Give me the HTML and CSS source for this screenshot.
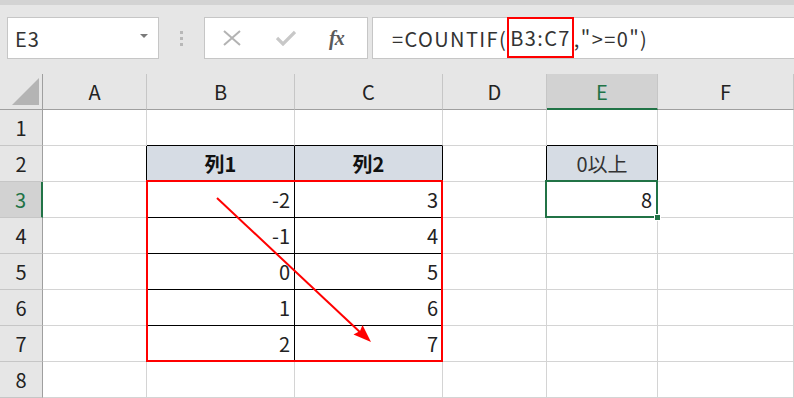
FILE: index.html
```html
<!DOCTYPE html>
<html lang="ja">
<head>
    <meta charset="UTF-8">
    <title>COUNTIF</title>
    <link rel="stylesheet" href="styles.css">
</head>
<body>
    <div class="toolbar">
        <div class="namebox">
            <span>E3</span>
            <span class="drop"></span>
        </div>
        <div class="grip"><i></i><i></i><i></i></div>
        <div class="fxbox">
            <svg class="ic" width="20" height="16" viewBox="0 0 20 16">
                <path d="M2 1 L18 15 M18 1 L2 15" stroke="#b3b3b3" stroke-width="2" fill="none"/>
            </svg>
            <svg class="ic" width="20" height="16" viewBox="0 0 20 16">
                <path d="M1 8 L7 14 L19 2" stroke="#c8c8c8" stroke-width="3.2" fill="none"/>
            </svg>
            <span class="fx">fx</span>
        </div>
        <div class="formula">
            <span>=COUNTIF(</span><span class="ref">B3:C7</span><span>,"&gt;=0")</span>
        </div>
    </div>

    <div class="sheet">
        <!-- header -->
        <div class="corner"><span class="tri"></span></div>
        <div class="ch">A</div>
        <div class="ch">B</div>
        <div class="ch">C</div>
        <div class="ch">D</div>
        <div class="ch on">E</div>
        <div class="ch">F</div>

        <!-- 1 -->
        <div class="rh">1</div>
        <div class="c"></div>
        <div class="c kb"></div>
        <div class="c kb"></div>
        <div class="c"></div>
        <div class="c kb"></div>
        <div class="c"></div>

        <!-- 2 -->
        <div class="rh">2</div>
        <div class="c kr"></div>
        <div class="c th bold">列1</div>
        <div class="c th bold">列2</div>
        <div class="c kr"></div>
        <div class="c th">0以上</div>
        <div class="c"></div>

        <!-- 3 -->
        <div class="rh on">3</div>
        <div class="c kr"></div>
        <div class="c td">-2</div>
        <div class="c td">3</div>
        <div class="c"></div>
        <div class="c num">8</div>
        <div class="c"></div>

        <!-- 4 -->
        <div class="rh">4</div>
        <div class="c kr"></div>
        <div class="c td">-1</div>
        <div class="c td">4</div>
        <div class="c"></div>
        <div class="c"></div>
        <div class="c"></div>

        <!-- 5 -->
        <div class="rh">5</div>
        <div class="c kr"></div>
        <div class="c td">0</div>
        <div class="c td">5</div>
        <div class="c"></div>
        <div class="c"></div>
        <div class="c"></div>

        <!-- 6 -->
        <div class="rh">6</div>
        <div class="c kr"></div>
        <div class="c td">1</div>
        <div class="c td">6</div>
        <div class="c"></div>
        <div class="c"></div>
        <div class="c"></div>

        <!-- 7 -->
        <div class="rh">7</div>
        <div class="c kr"></div>
        <div class="c td">2</div>
        <div class="c td">7</div>
        <div class="c"></div>
        <div class="c"></div>
        <div class="c"></div>

        <!-- 8 -->
        <div class="rh">8</div>
        <div class="c"></div>
        <div class="c"></div>
        <div class="c"></div>
        <div class="c"></div>
        <div class="c"></div>
        <div class="c"></div>

        <div class="range"></div>
        <div class="select"><span class="handle"></span></div>
        <svg class="arrow" width="794" height="324" viewBox="0 74 794 324">
            <line x1="217" y1="198" x2="362" y2="334" stroke="#ff0000" stroke-width="2"/>
            <polygon points="371,342 353.5,334.5 360,331 362.5,325" fill="#ff0000"/>
        </svg>
    </div>
</body>
</html>
```

FILE: styles.css
```css
* {
    margin: 0;
    padding: 0;
    box-sizing: border-box;
}

:root {
    --green: #217346;
    --grid: #d4d4d4;
    --head-bg: #e6e6e6;
    --head-on: #d2d2d2;
}

body {
    width: 794px;
    height: 398px;
    overflow: hidden;
    background: #fff;
    font-family: "Noto Sans CJK JP", "Noto Sans", sans-serif;
    color: #222;
}

/* 数式バー */
.toolbar {
    height: 74px;
    background: var(--head-bg);
    border-top: 5px solid #d3d3d3;
    padding-top: 12px;
    display: flex;
    align-items: flex-start;
}

.namebox {
    margin-left: 7px;
    width: 152px;
    height: 42px;
    background: #fff;
    border: 1px solid #c6c6c6;
    display: flex;
    align-items: center;
    justify-content: space-between;
    padding: 0 10px 0 7px;
    font-size: 20px;
    letter-spacing: 1px;
    color: #333;
}

.drop {
    width: 0;
    height: 0;
    border-left: 4px solid transparent;
    border-right: 4px solid transparent;
    border-top: 4px solid #7a7a7a;
    margin-bottom: 4px;
}

.grip {
    width: 45px;
    height: 42px;
    display: flex;
    flex-direction: column;
    align-items: center;
    justify-content: center;
    gap: 3px;
}

.grip i {
    width: 3px;
    height: 3px;
    background: #b8b8b8;
}

.fxbox {
    width: 164px;
    height: 42px;
    background: #fff;
    border: 1px solid #c6c6c6;
    display: flex;
    align-items: center;
    padding-left: 17px;
}

.fxbox .ic {
    margin-right: 34px;
}

.fxbox .ic + .ic {
    margin-right: 33px;
}

.fx {
    font-family: "Liberation Serif", serif;
    font-style: italic;
    font-weight: bold;
    font-size: 20px;
    color: #5a5a5a;
    letter-spacing: -1px;
}

.formula {
    flex: 1;
    margin-left: 4px;
    height: 42px;
    background: #fff;
    border: 1px solid #c6c6c6;
    border-right: none;
    display: flex;
    align-items: stretch;
    padding-left: 19px;
    font-size: 20px;
    letter-spacing: 1.4px;
    color: #333;
}

.formula span {
    display: flex;
    align-items: center;
}

.formula .ref {
    border: 2px solid #ff0000;
    padding: 0 1px 0 1px;
    margin-top: -1px;
}

/* シート */
.sheet {
    position: relative;
    display: grid;
    grid-template-columns: 43px 104px 148px 148px 104px 111px 136px;
    grid-template-rows: repeat(9, 36px);
}

.corner {
    background: var(--head-bg);
    border-right: 1px solid #9f9f9f;
    border-bottom: 1px solid #9f9f9f;
    position: relative;
}

.tri {
    position: absolute;
    left: 12px;
    top: 4px;
    width: 27px;
    height: 27px;
    background: #b4b4b4;
    clip-path: polygon(100% 0, 100% 100%, 0 100%);
}

.ch {
    background: var(--head-bg);
    border-right: 1px solid #c6c6c6;
    border-bottom: 1px solid #9f9f9f;
    display: flex;
    align-items: center;
    justify-content: center;
    font-size: 20px;
    color: #222;
}

.ch.on {
    background: var(--head-on);
    color: var(--green);
    border-bottom: 2px solid var(--green);
}

.rh {
    background: var(--head-bg);
    border-right: 1px solid #9f9f9f;
    border-bottom: 1px solid #c6c6c6;
    display: flex;
    align-items: center;
    justify-content: center;
    font-size: 20px;
    color: #222;
}

.rh.on {
    background: var(--head-on);
    color: var(--green);
    border-right: 2px solid var(--green);
}

.c {
    border-right: 1px solid var(--grid);
    border-bottom: 1px solid var(--grid);
    display: flex;
    align-items: center;
    font-size: 20px;
    color: #222;
}

.c.kb {
    border-bottom-color: #000;
}

.c.kr {
    border-right-color: #000;
}

.th {
    background: #d6dce4;
    border-right-color: #000;
    border-bottom-color: #000;
    justify-content: center;
    color: #333;
}

.th.bold {
    font-weight: bold;
    color: #111;
}

.td,
.num {
    justify-content: flex-end;
    padding-right: 4px;
}

.td {
    border-right-color: #000;
    border-bottom-color: #000;
}

.num {
    padding-right: 5px;
}

/* 注釈 */
.range {
    position: absolute;
    left: 146px;
    top: 106px;
    width: 297px;
    height: 182px;
    border: 2px solid #ff0000;
    pointer-events: none;
}

.select {
    position: absolute;
    left: 545px;
    top: 106px;
    width: 113px;
    height: 38px;
    border: 2px solid var(--green);
}

.handle {
    position: absolute;
    right: -5px;
    bottom: -5px;
    width: 7px;
    height: 7px;
    background: var(--green);
    border: 1px solid #fff;
}

.arrow {
    position: absolute;
    left: 0;
    top: 0;
    pointer-events: none;
}
```
